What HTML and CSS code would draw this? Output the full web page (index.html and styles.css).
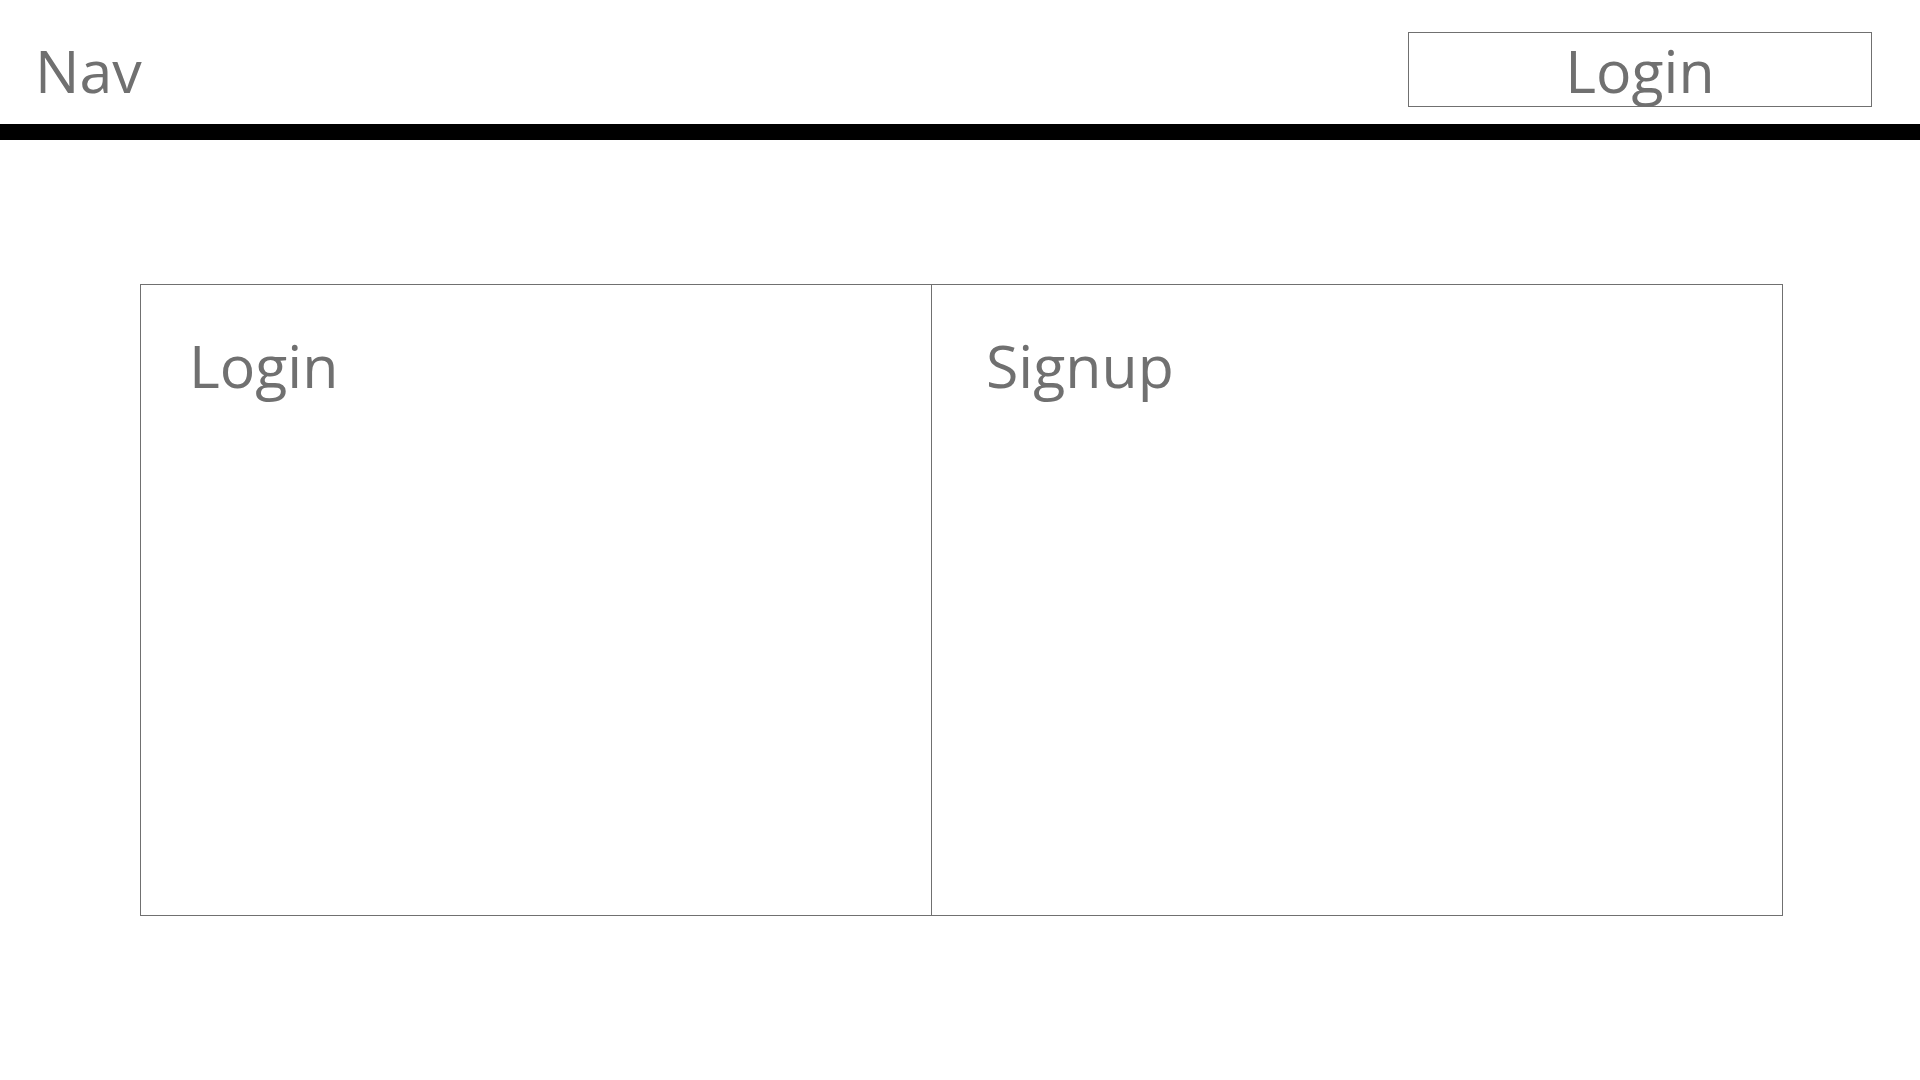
FILE: index.html
```html
<!DOCTYPE html>
<html>
<head>
<meta charset="utf-8">
<link rel="stylesheet" href="styles.css">
</head>
<body>
<header class="topbar">
  <div class="brand">Nav</div>
  <button class="login-btn">Login</button>
</header>
<div class="rule"></div>
<main class="panels">
  <section class="pane pane-login"><h2 class="pane-title">Login</h2></section>
  <section class="pane pane-signup"><h2 class="pane-title">Signup</h2></section>
</main>
</body>
</html>
```
FILE: styles.css
```css
html, body {
  margin: 0;
  padding: 0;
  background: #fff;
}
body {
  font-family: "Open Sans", "Noto Sans", sans-serif;
  color: #707070;
}
.topbar {
  height: 124px;
  box-sizing: border-box;
  display: flex;
  justify-content: space-between;
  align-items: flex-start;
  padding: 29px 48px 0 35px;
}
.brand {
  font-size: 59px;
  line-height: 82px;
  height: 82px;
}
.login-btn {
  margin-top: 3px;
  width: 464px;
  height: 75px;
  box-sizing: border-box;
  border: 1px solid #707070;
  background: #fff;
  color: #707070;
  font-family: inherit;
  font-size: 59px;
  line-height: 73px;
  padding: 1px 0 0;
  text-align: center;
}
.rule {
  height: 16px;
  background: #000;
}
.panels {
  margin: 144px 137px 0 140px;
  height: 632px;
  box-sizing: border-box;
  border: 1px solid #707070;
  display: grid;
  grid-template-columns: 791px 1fr;
}
.pane-login {
  border-right: 1px solid #707070;
}
.pane {
  padding: 39px 0 0 48px;
}
.pane-signup {
  padding-left: 54px;
}
.pane-title {
  margin: 0;
  font-weight: 400;
  font-size: 59px;
  line-height: 82px;
}
```
